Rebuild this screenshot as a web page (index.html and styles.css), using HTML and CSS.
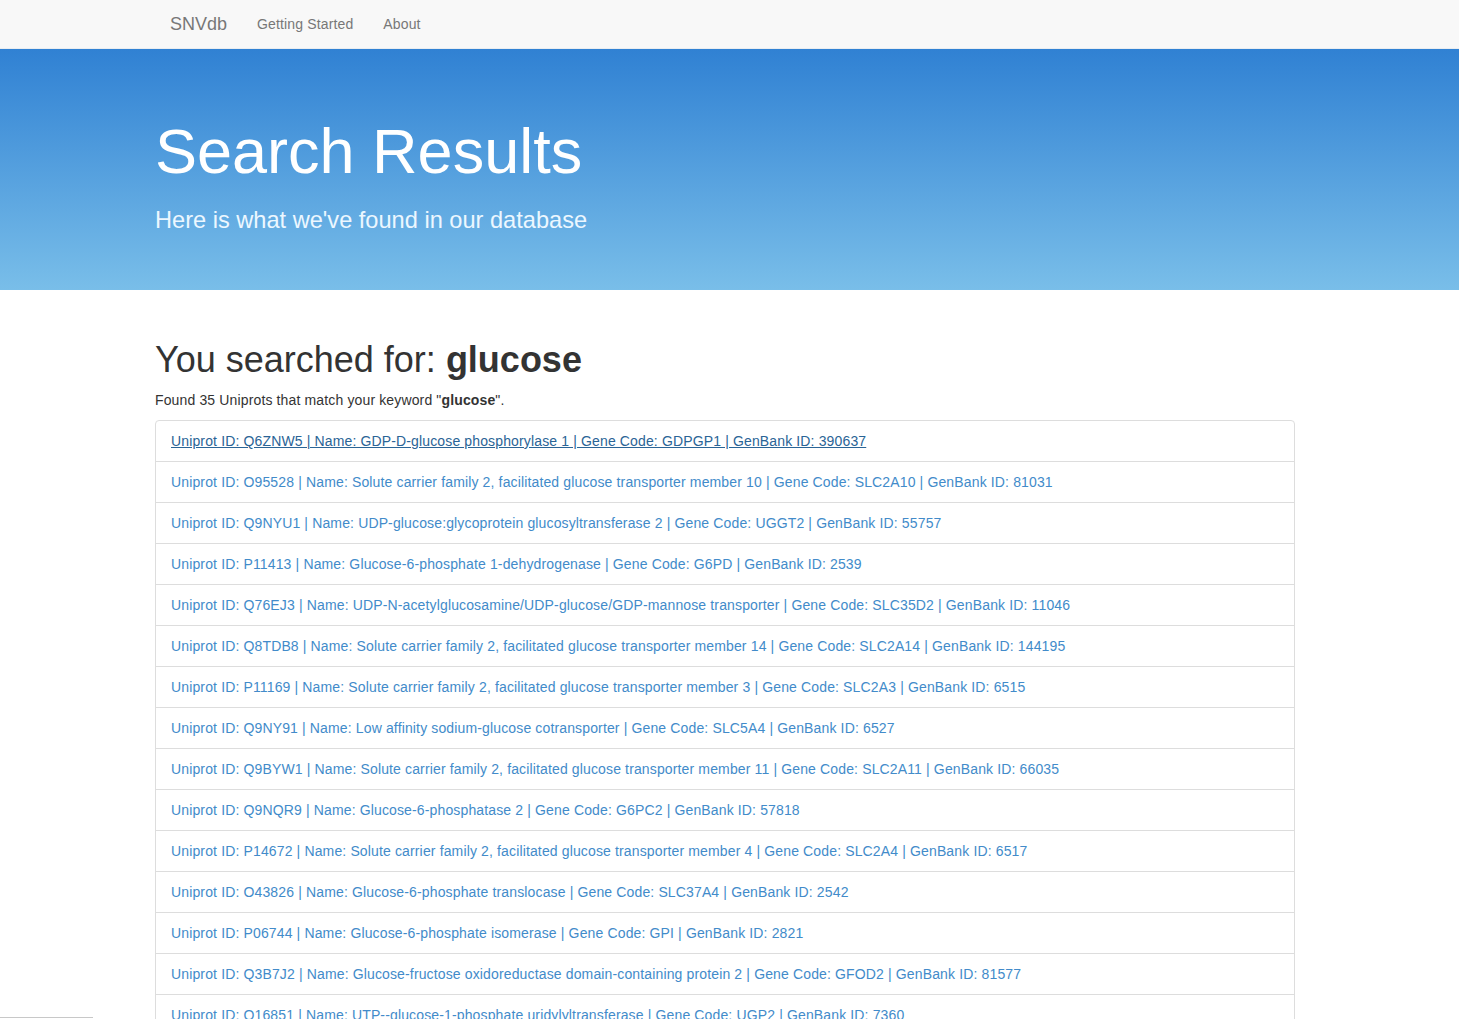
FILE: index.html
```html
<!DOCTYPE html>
<html lang="en">
<head>
<meta charset="utf-8">
<title>SNVdb - Search Results</title>
<link rel="stylesheet" href="styles.css">
</head>
<body>
<div class="page">
  <nav class="navbar">
    <div class="container nav-inner">
      <a class="brand" href="#">SNVdb</a>
      <a class="nav-link" href="#">Getting Started</a>
      <a class="nav-link" href="#">About</a>
    </div>
  </nav>
  <header class="jumbotron">
    <div class="container">
      <h1 class="jumbo-title">Search Results</h1>
      <p class="jumbo-lead">Here is what we've found in our database</p>
    </div>
  </header>
  <main class="container">
    <h1 class="search-title">You searched for: <b>glucose</b></h1>
    <p class="found">Found 35 Uniprots that match your keyword "<b>glucose</b>".</p>
    <div class="list-group">
      <div class="list-item"><a class="item-link active" href="#">Uniprot ID: Q6ZNW5 | Name: GDP-D-glucose phosphorylase 1 | Gene Code: GDPGP1 | GenBank ID: 390637</a></div>
      <div class="list-item"><a class="item-link" href="#">Uniprot ID: O95528 | Name: Solute carrier family 2, facilitated glucose transporter member 10 | Gene Code: SLC2A10 | GenBank ID: 81031</a></div>
      <div class="list-item"><a class="item-link" href="#">Uniprot ID: Q9NYU1 | Name: UDP-glucose:glycoprotein glucosyltransferase 2 | Gene Code: UGGT2 | GenBank ID: 55757</a></div>
      <div class="list-item"><a class="item-link" href="#">Uniprot ID: P11413 | Name: Glucose-6-phosphate 1-dehydrogenase | Gene Code: G6PD | GenBank ID: 2539</a></div>
      <div class="list-item"><a class="item-link" href="#">Uniprot ID: Q76EJ3 | Name: UDP-N-acetylglucosamine/UDP-glucose/GDP-mannose transporter | Gene Code: SLC35D2 | GenBank ID: 11046</a></div>
      <div class="list-item"><a class="item-link" href="#">Uniprot ID: Q8TDB8 | Name: Solute carrier family 2, facilitated glucose transporter member 14 | Gene Code: SLC2A14 | GenBank ID: 144195</a></div>
      <div class="list-item"><a class="item-link" href="#">Uniprot ID: P11169 | Name: Solute carrier family 2, facilitated glucose transporter member 3 | Gene Code: SLC2A3 | GenBank ID: 6515</a></div>
      <div class="list-item"><a class="item-link" href="#">Uniprot ID: Q9NY91 | Name: Low affinity sodium-glucose cotransporter | Gene Code: SLC5A4 | GenBank ID: 6527</a></div>
      <div class="list-item"><a class="item-link" href="#">Uniprot ID: Q9BYW1 | Name: Solute carrier family 2, facilitated glucose transporter member 11 | Gene Code: SLC2A11 | GenBank ID: 66035</a></div>
      <div class="list-item"><a class="item-link" href="#">Uniprot ID: Q9NQR9 | Name: Glucose-6-phosphatase 2 | Gene Code: G6PC2 | GenBank ID: 57818</a></div>
      <div class="list-item"><a class="item-link" href="#">Uniprot ID: P14672 | Name: Solute carrier family 2, facilitated glucose transporter member 4 | Gene Code: SLC2A4 | GenBank ID: 6517</a></div>
      <div class="list-item"><a class="item-link" href="#">Uniprot ID: O43826 | Name: Glucose-6-phosphate translocase | Gene Code: SLC37A4 | GenBank ID: 2542</a></div>
      <div class="list-item"><a class="item-link" href="#">Uniprot ID: P06744 | Name: Glucose-6-phosphate isomerase | Gene Code: GPI | GenBank ID: 2821</a></div>
      <div class="list-item"><a class="item-link" href="#">Uniprot ID: Q3B7J2 | Name: Glucose-fructose oxidoreductase domain-containing protein 2 | Gene Code: GFOD2 | GenBank ID: 81577</a></div>
      <div class="list-item"><a class="item-link" href="#">Uniprot ID: Q16851 | Name: UTP--glucose-1-phosphate uridylyltransferase | Gene Code: UGP2 | GenBank ID: 7360</a></div>
      <div class="list-item"><a class="item-link" href="#">Uniprot ID: P11168 | Name: Solute carrier family 2, facilitated glucose transporter member 2 | Gene Code: SLC2A2 | GenBank ID: 6514</a></div>
    </div>
  </main>
</div>
<div class="corner-line"></div>
</body>
</html>
```
FILE: styles.css
```css
html, body {
  margin: 0;
  padding: 0;
}
body {
  font-family: "Liberation Sans", Arial, Helvetica, sans-serif;
  font-size: 14px;
  line-height: 20px;
  letter-spacing: 0.14px;
  color: #333;
  background: #fff;
  overflow: hidden;
}
.page {
  padding-right: 9px;
}
.container {
  width: 1170px;
  margin: 0 auto;
  padding: 0 15px;
  box-sizing: border-box;
}
.navbar {
  height: 48px;
  background: #f8f8f8;
  border-bottom: 1px solid #e9edf1;
  margin-right: -9px;
}
.nav-inner {
  display: flex;
  align-items: center;
  height: 48px;
  position: relative;
  left: -4.5px;
}
.brand {
  font-size: 18px;
  line-height: 20px;
  padding: 14px 15px;
  color: #777;
  text-decoration: none;
  letter-spacing: 0;
}
.nav-link {
  font-size: 14px;
  line-height: 20px;
  padding: 14px 15px;
  color: #777;
  text-decoration: none;
}
.jumbotron {
  background: linear-gradient(to bottom, #3081d3 0%, #79bee9 100%);
  color: #fff;
  padding: 48px 0;
  height: 241px;
  box-sizing: border-box;
  margin-right: -9px;
  margin-bottom: 50px;
  letter-spacing: 0;
}
.jumbotron .container {
  position: relative;
  left: -4.5px;
}
.jumbo-title {
  font-size: 63px;
  font-weight: 400;
  line-height: 69px;
  margin: 20px 0 10px;
}
.jumbo-lead {
  font-size: 23.6px;
  line-height: 34px;
  font-weight: 400;
  margin: 17px 0 0;
  color: #ecf7ff;
}
.search-title {
  font-size: 36px;
  font-weight: 400;
  line-height: 40px;
  margin: 20px 0 10px;
  letter-spacing: 0;
}
.search-title b {
  font-weight: 700;
}
.found {
  margin: 0 0 10px;
}
.list-group {
  display: flex;
  flex-direction: column;
}
.list-item {
  padding: 10px 15px;
  border: 1px solid #ddd;
  margin-bottom: -1px;
  background: #fff;
}
.list-item:first-child {
  border-top-left-radius: 4px;
  border-top-right-radius: 4px;
}
.item-link {
  color: #428bca;
  text-decoration: none;
}
.item-link.active {
  color: #2a6496;
  text-decoration: underline;
}
.corner-line {
  position: fixed;
  left: 0;
  bottom: 1px;
  width: 93px;
  height: 1px;
  background: #c8c8c8;
}
```
